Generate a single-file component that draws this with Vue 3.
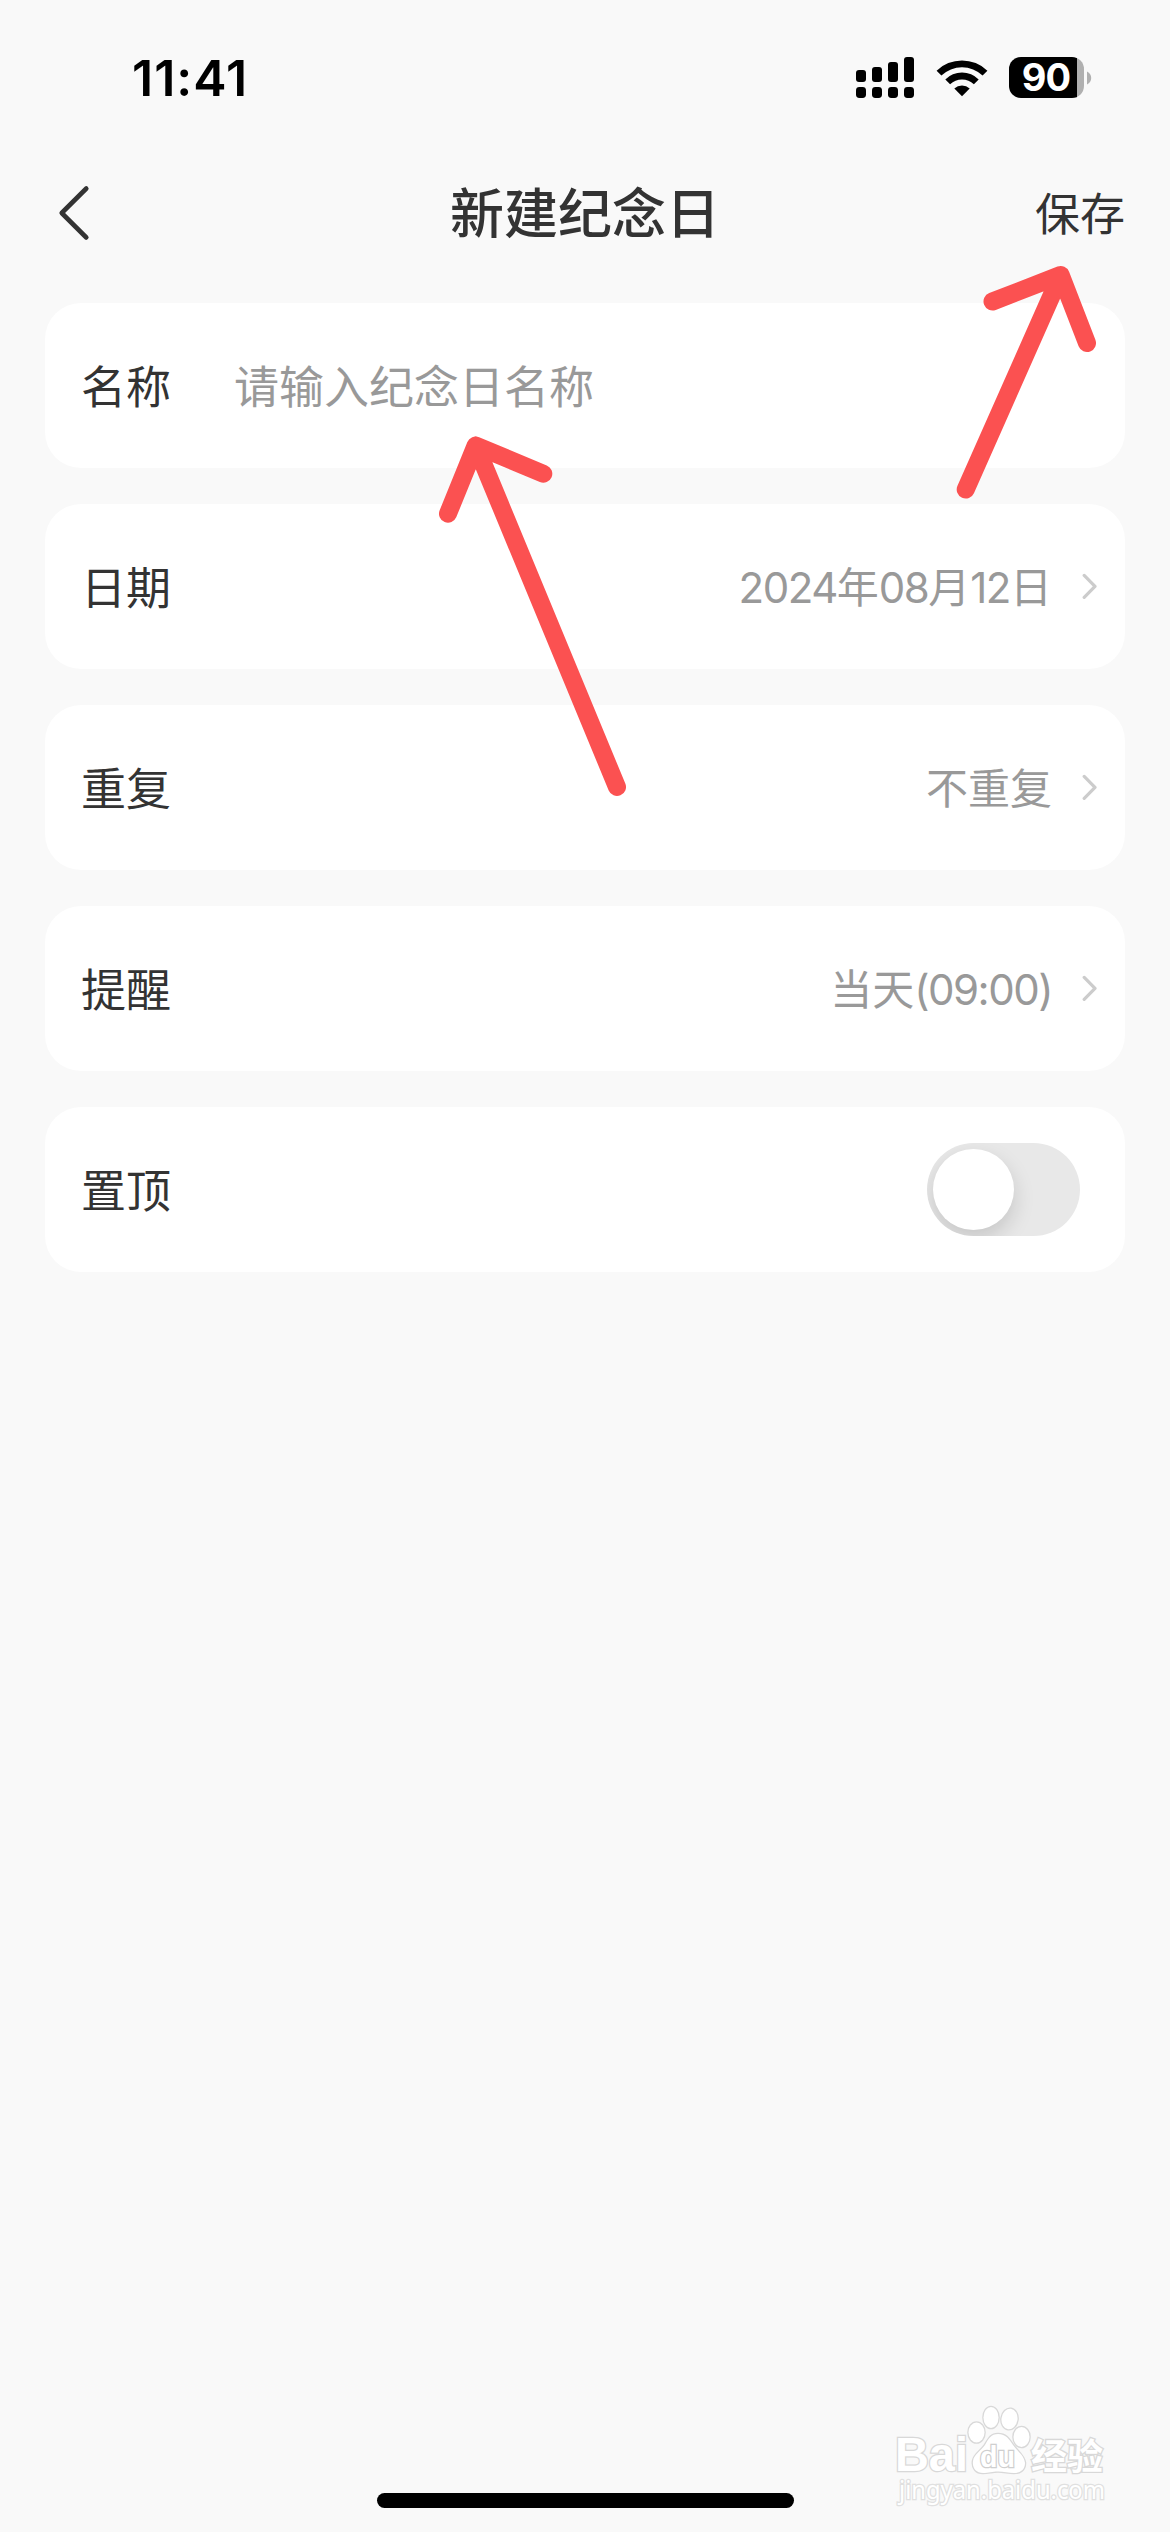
<script setup>
const rows = [
  { label: '日期', parts: ['2024', '年', '08', '月', '12', '日'] },
  { label: '重复', parts: ['不重复'] },
  { label: '提醒', parts: ['当天', '(09:00)'] },
]

const isLatin = (text) => /[0-9]/.test(text)
</script>

<template>
  <div class="screen">
    <header class="status">
      <span class="clock">11:41</span>
      <div class="indicators">
        <svg class="signal" width="58" height="41" viewBox="0 0 58 41">
          <rect x="0" y="13" width="10" height="12" rx="3" />
          <rect x="16" y="10" width="10" height="15" rx="3" />
          <rect x="32" y="5" width="10" height="20" rx="3" />
          <rect x="48" y="0" width="10" height="25" rx="3" />
          <rect v-for="n in 4" :key="n" :x="(n - 1) * 16" y="30" width="10" height="11" rx="3.4" />
        </svg>
        <svg class="wifi" width="52" height="38" viewBox="0 0 52 38">
          <path d="M0.6 11.7 A36.5 36.5 0 0 1 51.4 11.7 L46.6 16.5 A30 30 0 0 0 5.4 16.5 Z" />
          <path d="M9.3 20.4 A23.5 23.5 0 0 1 42.7 20.4 L37.9 25.2 A17.5 17.5 0 0 0 14.1 25.2 Z" />
          <path d="M18.3 29.4 A12 12 0 0 1 33.7 29.4 L26 37.2 Z" />
        </svg>
        <div class="battery">
          <div class="cell"><span class="percent">90</span></div>
          <svg width="5" height="14" viewBox="0 0 5 14">
            <path d="M0 0.5 Q4.2 2.6 4.2 7 Q4.2 11.4 0 13.5 Z" fill="#b0b0b0" />
          </svg>
        </div>
      </div>
    </header>

    <nav class="nav">
      <svg class="back" width="36" height="56" viewBox="0 0 36 56">
        <path d="M29.3 3.5 L4.7 28 L29.3 52.5" />
      </svg>
      <h1 class="title">新建纪念日</h1>
      <span class="save">保存</span>
    </nav>

    <main class="form">
      <section class="card">
        <span class="label">名称</span>
        <span class="placeholder">请输入纪念日名称</span>
      </section>
      <section v-for="row in rows" :key="row.label" class="card">
        <span class="label">{{ row.label }}</span>
        <span class="value"><span v-for="(part, i) in row.parts" :key="i" :class="{ latin: isLatin(part) }">{{ part }}</span></span>
        <svg class="chevron" width="16" height="27" viewBox="0 0 16 27">
          <path d="M2.2 2.4 L13 13.4 L2.2 24.4" />
        </svg>
      </section>
      <section class="card">
        <span class="label">置顶</span>
        <span class="switch"><span class="knob"></span></span>
      </section>
    </main>

    <div class="home-bar"></div>

    <svg class="arrows" width="700" height="600" viewBox="430 240 700 600">
      <path d="M965.7 489.5 L1060.7 275 M992.5 301.5 L1060.7 275 L1087 343" />
      <path d="M617 787 L475.7 445.5 M448 513.7 L475.7 445.5 L543.3 473.7" />
    </svg>

    <svg class="watermark" width="240" height="120" viewBox="0 0 240 120">
      <g class="mark">
        <text class="brand" x="5" y="61" textLength="73" lengthAdjust="spacingAndGlyphs">Bai</text>
        <ellipse cx="86.5" cy="22.5" rx="8" ry="10" />
        <ellipse cx="101" cy="7.5" rx="7.5" ry="10.5" />
        <ellipse cx="119.5" cy="9" rx="8" ry="10.3" transform="rotate(8 119.5 9)" />
        <ellipse cx="131.5" cy="27" rx="8" ry="10" />
        <path d="M108 24 C116 24 119 29 123 35 C127 41 134 45 135 53 C135 60 130 63 124 63 C118 63 114 61.500 108 61.500 C102 61.500 99 63 93 63 C86 63 82 58 83 51 C84 44 91 41 95 35 C99 28 101 24 108 24 Z" />
        <text class="du" x="90" y="56.500" textLength="35" lengthAdjust="spacingAndGlyphs">du</text>
        <text class="cn" x="141" y="60">经验</text>
        <text class="site" x="9" y="89" textLength="206" lengthAdjust="spacingAndGlyphs">jingyan.baidu.com</text>
      </g>
    </svg>
  </div>
</template>

<style>
body {
  margin: 0;
  background: #f9f9f9;
}
</style>

<style scoped>
.screen {
  position: relative;
  display: flex;
  flex-direction: column;
  width: 1170px;
  height: 2532px;
  overflow: hidden;
  background: #f9f9f9;
  color: #333;
  font-family: Inter, "Noto Sans CJK SC", sans-serif;
}

.status {
  display: flex;
  align-items: center;
  justify-content: space-between;
  box-sizing: border-box;
  height: 141px;
  padding: 14px 78px 0 132px;
  color: #000;
}

.clock {
  font-size: 50px;
  font-weight: 600;
  line-height: 60px;
  letter-spacing: 1px;
}

.indicators {
  display: flex;
  align-items: center;
}

.wifi {
  margin-left: 22px;
}

.battery {
  display: flex;
  align-items: center;
  gap: 3px;
  margin-left: 21px;
}

.cell {
  width: 75px;
  height: 41px;
  border-radius: 12px;
  background: linear-gradient(90deg, #000 68px, #b0b0b0 68px);
}

.percent {
  display: block;
  width: 74px;
  color: #fff;
  font-size: 38px;
  font-weight: 700;
  line-height: 41px;
  text-align: center;
  letter-spacing: -1px;
}

.nav {
  display: grid;
  grid-template-columns: 1fr auto 1fr;
  align-items: center;
  height: 144px;
  padding: 0 45px 0 57px;
}

.back {
  margin-bottom: 1px;
}

.back path,
.chevron path {
  fill: none;
  stroke: #333;
  stroke-width: 4.6;
  stroke-linecap: round;
  stroke-linejoin: round;
}

.title {
  margin: 0 0 4px -12px;
  font-family: "Noto Sans CJK SC", sans-serif;
  font-size: 54px;
  font-weight: 500;
  line-height: 78px;
}

.save {
  justify-self: end;
}

.form {
  display: flex;
  flex-direction: column;
  gap: 36px;
  margin: 18px 45px 0;
}

.card {
  display: flex;
  align-items: center;
  box-sizing: border-box;
  height: 165px;
  padding: 0 27px 0 36px;
  border-radius: 36px;
  background: #fff;
}

.label,
.placeholder,
.save {
  margin-bottom: 2px;
  font-family: "Noto Sans CJK SC", sans-serif;
  font-size: 45px;
  line-height: 66px;
}

.placeholder {
  margin-left: 63px;
  color: #999;
}

.value {
  margin: 2px 0 0 auto;
  color: #999;
  font-size: 42px;
  line-height: 60px;
}

.latin {
  letter-spacing: -1.5px;
}

.chevron {
  margin-left: 30px;
}

.chevron path {
  stroke: #ccc;
  stroke-width: 3.2;
}

.switch {
  display: block;
  box-sizing: border-box;
  width: 153px;
  height: 93px;
  margin: 0 18px 0 auto;
  padding: 6px;
  overflow: hidden;
  border-radius: 47px;
  background: #e8e8e8;
}

.knob {
  display: block;
  width: 81px;
  height: 81px;
  border-radius: 50%;
  background: #fff;
  box-shadow: 0 9px 21px rgba(0, 0, 0, 0.15);
}

.home-bar {
  width: 417px;
  height: 15px;
  margin: auto auto 24px;
  border-radius: 8px;
  background: #000;
}

.arrows {
  position: absolute;
  left: 430px;
  top: 240px;
  fill: none;
  stroke: #fb5151;
  stroke-width: 18;
  stroke-linecap: round;
  stroke-linejoin: round;
}

.watermark {
  position: absolute;
  left: 890px;
  top: 2410px;
  overflow: visible;
}

.mark {
  fill: #fff;
  stroke: #d8d8d8;
  stroke-width: 2.6;
  paint-order: stroke;
}

.brand {
  font: 700 48px "Liberation Sans", sans-serif;
}

.du {
  font: 700 30px "Liberation Sans", sans-serif;
  stroke: #cfcfcf;
}

.cn {
  font: 700 36px "Noto Sans CJK SC", sans-serif;
}

.site {
  font: 400 25px "Noto Sans", sans-serif;
  stroke: #e0e0e0;
}
</style>
